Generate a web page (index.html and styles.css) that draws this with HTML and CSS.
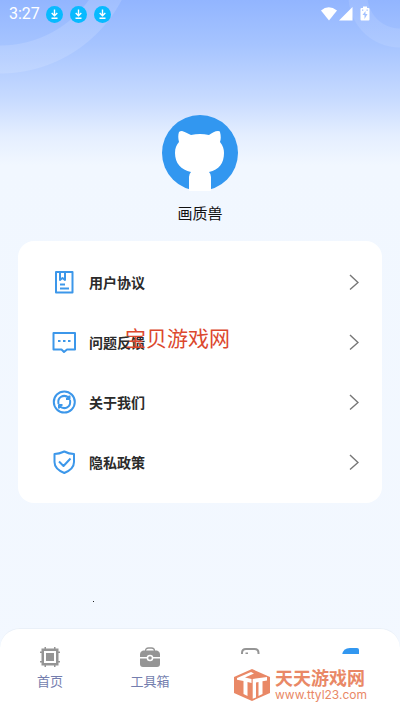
FILE: index.html
```html
<!DOCTYPE html>
<html lang="zh-CN">
<head>
<meta charset="utf-8">
<meta name="viewport" content="width=device-width, initial-scale=1">
<title>画质兽</title>
<link rel="stylesheet" href="styles.css">
</head>
<body>
<div class="ring ring-left"></div>
<div class="ring ring-right"></div>
<svg class="defs" width="0" height="0" aria-hidden="true">
  <symbol id="download" viewBox="0 0 17 17">
    <circle cx="8.500" cy="8.500" r="8.500" fill="#08baff"/>
    <path d="M8.500 3.500v6M5.700 7l2.800 2.800L11.300 7M5.500 12.200h6" fill="none" stroke="#fff" stroke-width="1.400"/>
  </symbol>
  <symbol id="chevron" viewBox="0 0 10 16">
    <path d="M1 1l8 7.500L1 15.500" fill="none" stroke="#777" stroke-width="1.400"/>
  </symbol>
</svg>

<header class="status">
  <span class="time">3:27</span>
  <svg class="dl"><use href="#download"/></svg>
  <svg class="dl"><use href="#download"/></svg>
  <svg class="dl"><use href="#download"/></svg>
  <svg class="signals" viewBox="0 0 50 16" fill="#fff">
    <path d="M1 4.500Q8.500 -2 17 4.500L9 14.500z"/>
    <path d="M19 14.500L32.500 1v13.500z"/>
    <path fill-rule="evenodd" d="M43 0.500h4v1.500h1.500q1 0 1 1v10.500q0 1-1 1h-7q-1 0-1-1V3q0-1 1-1H43zM45.500 5l-3 4h2v4l3-5h-2zM42 3.500v1.200h1.300V3.500zM46.500 3.500v1.200h1.300V3.500z"/>
  </svg>
</header>

<main class="content">
  <section class="profile">
    <svg class="avatar" viewBox="0 0 76 76">
      <circle cx="38" cy="38" r="38" fill="#3297f0"/>
      <path fill="#fff" d="M27 76V62q0-3 2-5C19 55 13 48 13 38c0-5 1.500-8 4-11-1-4-1-7 0-10q1-1 3-1c4 1 6 3 9 4q9-2 18 0c3-2 6-4 9-4q2 0 2 1c1 4 1 7 0 10 3 4 4 7 4 11 0 10-5 17-15 19q2 2 2 5v14z"/>
    </svg>
    <h1 class="name">画质兽</h1>
  </section>

  <nav class="menu">
    <a class="row" href="#agreement">
      <svg class="icon" viewBox="0 0 24 24"><path d="M4 2h16.500v20.500H4zM8 2v8l2.500-2 2.500 2V2M8 14.500h5M8 18.500h9"/></svg>
      <span class="label">用户协议</span>
      <svg class="chevron"><use href="#chevron"/></svg>
    </a>
    <a class="row" href="#feedback">
      <svg class="icon" viewBox="0 0 24 24"><path d="M1.500 3h21.500v16.500h-8L12 22l-2.500-2.500h-8zM6 11h2.500M11 11h2.500M16 11h2.500"/></svg>
      <span class="label">问题反馈</span>
      <svg class="chevron"><use href="#chevron"/></svg>
    </a>
    <a class="row" href="#about">
      <svg class="icon" viewBox="0 0 24 24"><circle cx="12.300" cy="12" r="10.500"/><path d="M6.500 14C5 7 12 3.500 17 8M18 10C19.500 17 12.500 20.500 7.500 16M17.500 5.500V9H14M7 18.500V15h3.500"/></svg>
      <span class="label">关于我们</span>
      <svg class="chevron"><use href="#chevron"/></svg>
    </a>
    <a class="row" href="#privacy">
      <svg class="icon" viewBox="0 0 24 24"><path d="M12.300 1.500Q17 4 22 4v8q0 7-9.700 11Q2.500 19 2.500 12V4Q7 4 12.300 1.500zM7 11.500l4.500 4.500 7-7.500"/></svg>
      <span class="label">隐私政策</span>
      <svg class="chevron"><use href="#chevron"/></svg>
    </a>
    <span class="mark">宝贝游戏网</span>
  </nav>
  <span class="speck"></span>
</main>

<nav class="tabs">
  <a class="tab" href="#home">
    <svg class="tab-icon" viewBox="0 0 20 20" fill="#959595"><path fill-rule="evenodd" d="M1.500 1.500h17v17h-17zM4 4v12h12V4z"/><path d="M6 6h8v8H6zM4.500 0H6v3H4.500zM14 0h1.500v3H14zM4.500 17H6v3H4.500zM14 17h1.500v3H14zM0 4.500h3V6H0zM0 14h3v1.500H0zM17 4.500h3V6h-3zM17 14h3v1.500h-3z"/></svg>
    <span>首页</span>
  </a>
  <a class="tab" href="#tools">
    <svg class="tab-icon" viewBox="0 0 20 20"><path d="M5.500 4q0-3 3-3h3q3 0 3 3" fill="none" stroke="#959595" stroke-width="1.300"/><path fill="#959595" d="M3 3.500h14q3 1 3 4V10H0V7.500q0-3 3-4zM0 11.500h20V17q0 3-3 3H3q-3 0-3-3z"/><circle cx="10" cy="11" r="3.300" fill="#fff"/><circle cx="10" cy="11" r="1.800" fill="#959595"/></svg>
    <span>工具箱</span>
  </a>
  <a class="tab" href="#gallery" aria-label="图库">
    <svg class="tab-icon" viewBox="0 0 20 20" fill="none" stroke="#959595" stroke-width="2"><path d="M2 18V6q0-4 4-4h8.500q4 0 4 4v12M5.500 6.500H8"/></svg>
  </a>
  <a class="tab" href="#me" aria-label="我的">
    <svg class="tab-icon" viewBox="0 0 20 20" fill="#3297f0"><path d="M2 18V8q1-7 8-7h7q2 0 2 2v15z"/></svg>
  </a>
  <div class="brand">
    <svg class="brand-logo" viewBox="0 0 36 32">
      <path fill="#e98866" d="M18 0l18 8v16l-18 8L0 24V8z"/>
      <path fill="#fff" d="M3 9l14-6 3 1.500-9 4 6.500 1.500v4l-4-1V27l-4-2V12L3 10.800z"/>
      <path fill="#fff" d="M18.700 10L33 8v3.500l-4.500 0.700V25l-4 2V13l-2.500 0.400V28.500l-3.300 1.200z"/>
    </svg>
    <div class="brand-text">
      <strong>天天游戏网</strong>
      <span>www.ttyl23.com</span>
    </div>
  </div>
</nav>
</body>
</html>
```
FILE: styles.css
```css
* {
  box-sizing: border-box;
}

body {
  position: relative;
  display: flex;
  flex-direction: column;
  min-height: 100vh;
  margin: 0;
  overflow-x: hidden;
  font-family: "Noto Sans", "Noto Sans CJK SC", sans-serif;
  background: linear-gradient(#92b5ff 0, #a6c4ff 45px, #c8dbff 100px, #e4eeff 135px, #f1f7ff 165px, #f3f8ff 100%);
}

a {
  color: inherit;
  text-decoration: none;
}

.defs {
  position: absolute;
}

.ring {
  position: absolute;
  pointer-events: none;
}

.ring-left {
  inset: 0 auto auto 0;
  width: 130px;
  height: 76px;
  background: radial-gradient(circle at 0 -64px, transparent 109px, rgba(255, 255, 255, 0.14) 110px 137px, transparent 138px);
}

.ring-right {
  inset: 0 0 auto auto;
  width: 60px;
  height: 56px;
  background: radial-gradient(circle at 100% -4px, transparent 32px, rgba(255, 255, 255, 0.1) 33px 51px, transparent 52px);
}

.status {
  position: relative;
  display: flex;
  align-items: center;
  height: 28px;
  padding: 0 30px 0 9px;
}

.time {
  width: 37px;
  color: #fff;
  font: 16px/28px Roboto, sans-serif;
}

.dl {
  width: 17px;
  height: 17px;
  margin-right: 7px;
}

.signals {
  width: 50px;
  height: 16px;
  margin-left: auto;
}

.content {
  flex: 1;
  padding: 87px 18px 0;
}

.profile {
  display: flex;
  flex-direction: column;
  align-items: center;
}

.avatar {
  width: 76px;
  height: 76px;
}

.name {
  margin: 10px 0 16px;
  color: #111;
  font-size: 15px;
  font-weight: 400;
  line-height: 24px;
}

.menu {
  position: relative;
  padding: 11px 0;
  background: #fff;
  border-radius: 16px;
}

.row {
  display: flex;
  align-items: center;
  height: 60px;
  padding: 0 23px 0 34px;
}

.icon {
  width: 24px;
  height: 24px;
  fill: none;
  stroke: #3c97ea;
  stroke-width: 2;
  stroke-linejoin: round;
}

.label {
  flex: 1;
  margin-left: 13px;
  color: #2b2b2b;
  font-size: 14px;
  font-weight: 700;
}

.chevron {
  width: 10px;
  height: 16px;
}

.mark {
  position: absolute;
  top: 82px;
  left: 107px;
  color: #dc482e;
  font-size: 21px;
  line-height: 30px;
}

.speck {
  display: block;
  width: 1px;
  height: 1px;
  margin: 98px 0 0 75px;
  background: #222;
}

.tabs {
  position: relative;
  display: grid;
  grid-template-columns: repeat(4, 1fr);
  height: 83px;
  background: #fff;
  border-top: 1px solid #eaf0f8;
  border-radius: 20px 20px 0 0;
}

.tab {
  display: flex;
  flex-direction: column;
  align-items: center;
  gap: 4px;
  padding-top: 18px;
  color: #747eae;
  font-size: 13px;
  line-height: 20px;
}

.tab-icon {
  width: 20px;
  height: 20px;
}

.brand {
  position: absolute;
  right: 24px;
  bottom: 0;
  display: flex;
  align-items: center;
  gap: 5px;
  width: 148px;
  height: 57px;
  padding: 5px 0 0 6px;
  background: #fff;
}

.brand-logo {
  flex: none;
  width: 36px;
  height: 32px;
}

.brand-text {
  display: flex;
  flex-direction: column;
  color: #e98866;
}

.brand-text strong {
  font-size: 18px;
  line-height: 20px;
}

.brand-text span {
  font: 12px/14px Inter, sans-serif;
}
```
